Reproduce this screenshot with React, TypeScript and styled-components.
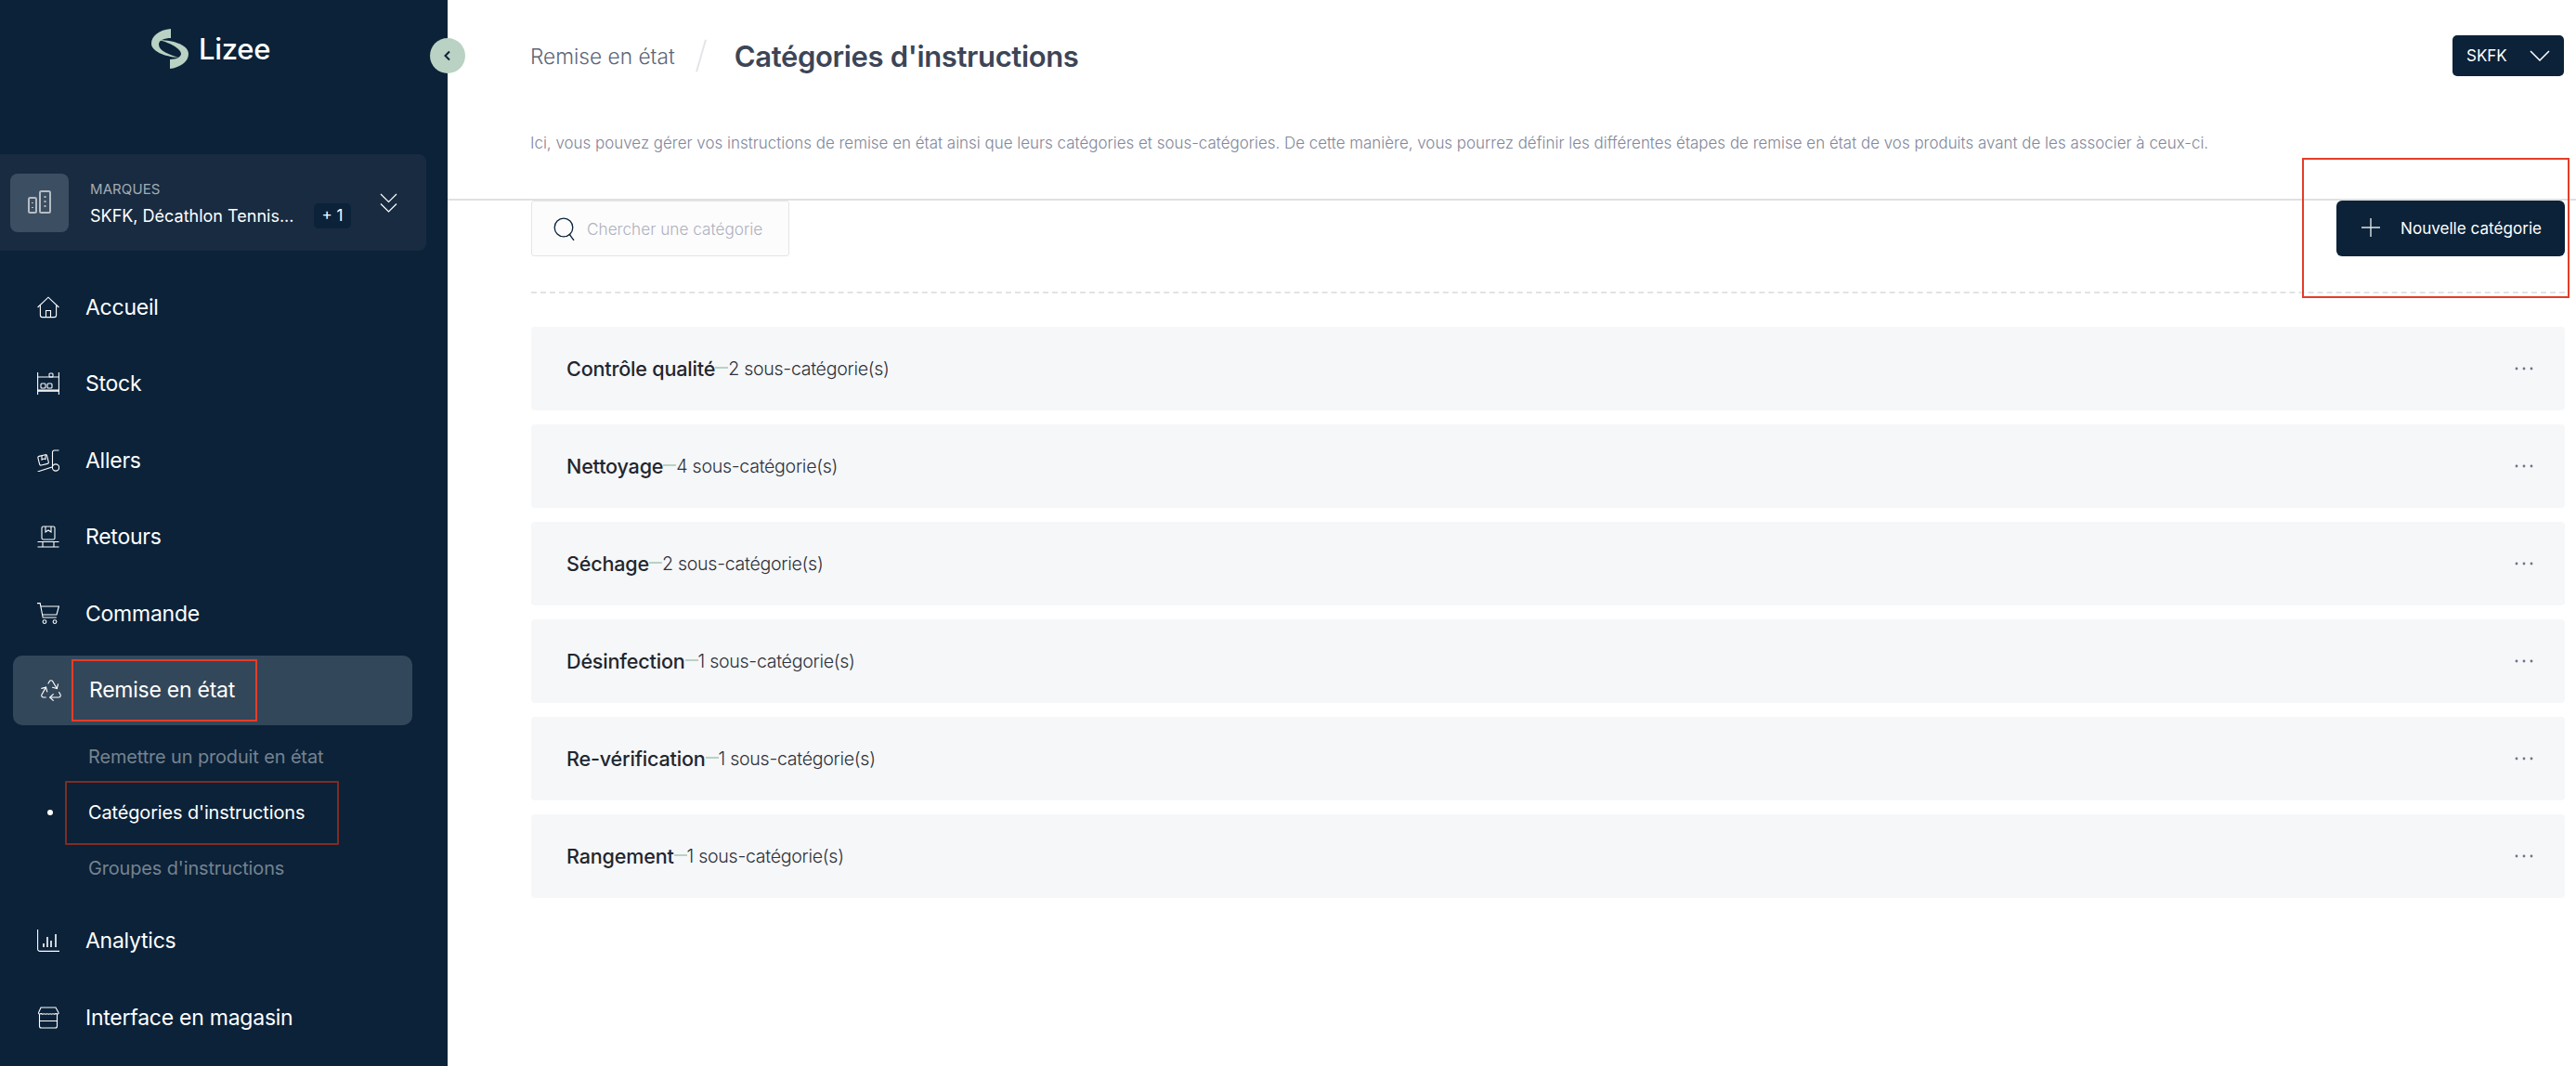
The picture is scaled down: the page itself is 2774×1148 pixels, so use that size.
import React from "react";
import styled, { createGlobalStyle } from "styled-components";
import { Recycle } from "lucide-react";

const Global = createGlobalStyle`
html, body {
  margin: 0;
  padding: 0;
  background: #fff;
  font-family: Inter, "Liberation Sans", sans-serif;
}
* { box-sizing: border-box; }
`

const Page = styled.div`
display: flex;
width: 2774px;
height: 1148px;
overflow: hidden;
`

const Sidebar = styled.aside`
position: relative;
flex: 0 0 482px;
display: flex;
flex-direction: column;
background-color: #0b2239;
color: #fff;
`

const LogoRow = styled.div`
height: 166px;
display: flex;
align-items: flex-start;
padding: 31px 0 0 163px;
gap: 11px;
`

const LogoText = styled.span`
font-size: 31px;
font-weight: 500;
line-height: 43px;
letter-spacing: -0.3px;
`

const CollapseButton = styled.button`
position: absolute;
top: 41px;
left: 463px;
width: 38px;
height: 38px;
padding: 0;
border: none;
border-radius: 50%;
background-color: #b9d2c3;
display: flex;
align-items: center;
justify-content: center;
color: #0b2239;
`

const BrandPanel = styled.div`
width: 459px;
height: 104px;
display: flex;
align-items: center;
padding-left: 11px;
background-color: #182b41;
border-radius: 0 8px 8px 0;
`

const BrandIcon = styled.div`
width: 63px;
height: 63px;
border-radius: 8px;
background-color: #3c4e61;
color: #b5bcc4;
display: flex;
align-items: center;
justify-content: center;
`

const BrandText = styled.div`
margin: 3px 0 0 23px;
width: 281px;
`

const BrandLabel = styled.div`
font-size: 15px;
line-height: 20px;
color: #a3acb6;
letter-spacing: 0.1px;
`

const BrandValue = styled.div`
margin-top: 5px;
display: flex;
align-items: center;
justify-content: space-between;
font-size: 18px;
line-height: 27px;
letter-spacing: 0;
`

const CountBadge = styled.span`
width: 40px;
height: 27px;
border-radius: 5px;
background-color: #0b2239;
font-size: 17px;
text-align: center;
`

const DoubleChevron = styled.svg`
margin-left: 31px;
width: 19px;
height: 21px;
`

const Nav = styled.nav`
padding-top: 23px;
display: flex;
flex-direction: column;
`

const NavItem = styled.div<{ $active?: boolean }>`
height: 75px;
margin-bottom: 7.5px;
display: flex;
align-items: center;
gap: ${(p) => (p.$active ? "10px" : "28px")};
margin-left: ${(p) => (p.$active ? "14px" : "0")};
width: ${(p) => (p.$active ? "430px" : "auto")};
padding-left: ${(p) => (p.$active ? "29px" : "40px")};
border-radius: 10px;
background-color: ${(p) => (p.$active ? "#33475b" : "transparent")};
font-size: 23px;
line-height: 32px;
letter-spacing: -0.25px;
svg { flex: 0 0 24px; width: 24px; height: 24px; }
`

const MarkedLabel = styled.span`
display: flex;
align-items: center;
width: 200px;
height: 67px;
padding-left: 17px;
border: 2px solid #e43d27;
`

const SubMenu = styled.div`
margin-top: -3px;
margin-bottom: 10.5px;
display: flex;
flex-direction: column;
`

const SubItem = styled.div<{ $current?: boolean }>`
position: relative;
height: 60px;
display: flex;
align-items: center;
padding-left: 95px;
font-size: 19.9px;
letter-spacing: -0.1px;
color: ${(p) => (p.$current ? "#fff" : "#76838f")};
`

const CurrentDot = styled.span`
position: absolute;
left: 51px;
top: 27px;
width: 6px;
height: 6px;
border-radius: 50%;
background-color: #fff;
`

const SubMarker = styled.span`
position: absolute;
left: 70px;
top: -4px;
width: 295px;
height: 69px;
border: 2px solid #7f2c23;
border-radius: 1px;
`

const Main = styled.main`
flex: 1;
min-width: 0;
display: flex;
flex-direction: column;
`

const Header = styled.header`
height: 216px;
border-bottom: 2px solid #e0e0e2;
padding: 0 13px 0 89px;
`

const TitleRow = styled.div`
height: 120px;
display: flex;
align-items: center;
`

const Crumb = styled.span`
font-size: 22.7px;
font-weight: 300;
color: #5d6679;
`

const Slash = styled.span`
width: 2px;
height: 36px;
margin: 0 35px 0 27px;
background-color: #e3e5e8;
transform: rotate(16deg);
`

const Title = styled.h1`
margin: 0;
flex: 1;
font-size: 31px;
font-weight: 600;
color: #3c4557;
letter-spacing: -0.35px;
`

const BrandSelect = styled.div`
width: 120px;
height: 44px;
display: flex;
align-items: center;
justify-content: space-between;
padding: 0 15px;
border-radius: 5px;
background-color: #0b2239;
color: #fff;
font-size: 17px;
`

const Intro = styled.p`
margin: 23px 0 0;
font-size: 16.95px;
line-height: 22px;
font-weight: 300;
color: #81869a;
white-space: nowrap;
`

const Content = styled.div`
padding: 0 12px 0 90px;
`

const Toolbar = styled.div`
position: relative;
height: 100px;
display: flex;
justify-content: space-between;
align-items: flex-start;
border-bottom: 2px dashed #e2e3e8;
`

const Search = styled.div`
width: 278px;
height: 60px;
display: flex;
align-items: center;
gap: 11px;
padding-left: 23px;
background-color: #fcfcfd;
border: 1px solid #e4e5e8;
border-radius: 3px;
font-size: 17.2px;
font-weight: 300;
color: #aeb1bd;
`

const AddButton = styled.button`
width: 246px;
height: 60px;
display: flex;
align-items: center;
gap: 22px;
padding: 0 0 2px 27px;
border: none;
border-radius: 6px;
background-color: #0b2239;
color: #fff;
font-family: inherit;
font-size: 17.1px;
white-space: nowrap;
`

const ButtonMarker = styled.span`
position: absolute;
top: -46px;
left: 1907px;
width: 288px;
height: 151px;
border: 2px solid #e43d27;
`

const List = styled.div`
padding-top: 36px;
display: flex;
flex-direction: column;
gap: 15px;
`

const Row = styled.div`
height: 90px;
display: flex;
align-items: center;
padding: 0 34px 0 38px;
background-color: #f6f7f9;
border-radius: 4px;
`

const RowName = styled.span`
font-size: 21.6px;
font-weight: 500;
color: #22262e;
letter-spacing: -0.2px;
`

const RowDash = styled.span`
width: 14px;
height: 2px;
margin-bottom: 3px;
background-color: #b9d2c3;
`

const RowCount = styled.span`
flex: 1;
font-size: 19.6px;
font-weight: 300;
color: #2e323a;
letter-spacing: -0.3px;
`

const RowMenu = styled.svg`
width: 20px;
height: 6px;
color: #6c7488;
`

const NavIcon: React.FC<{ name: string }> = ({ name }) => {
  const common = { viewBox: "0 0 24 24", fill: "none", stroke: "currentColor", strokeWidth: 1.1 };
  switch (name) {
    case "home":
      return (
        <svg {...common}>
          <path d="M0.6 12 12 1.2 23.4 12" />
          <path d="M3.4 10v10.6a2 2 0 0 0 2 2h13.2a2 2 0 0 0 2-2V10" />
          <path d="M9.5 22.5v-7h5v7" />
        </svg>
      );
    case "stock":
      return (
        <svg {...common}>
          <path d="M.6 0v24M23.4 0v24M.6 5h22.8M.6 19h22.8" />
          <path d="M.6 20h22.8" strokeWidth="1.6" />
          <rect x="4" y="12" width="5" height="5" rx="1" />
          <rect x="11" y="12" width="5" height="5" rx="1" />
          <rect x="13" y="1" width="4" height="4" rx="1" />
        </svg>
      );
    case "out":
      return (
        <svg {...common}>
          <path d="M23.5 1h-5a2 2 0 0 0-2 2v15" />
          <circle cx="20" cy="19.5" r="3.6" />
          <path d="M.5 24 16 19" />
          <rect x="1.5" y="6.5" width="10" height="10" rx="1.5" transform="rotate(-14 6 11)" />
          <path d="M5 7v4l2-1 2 .5V6" />
        </svg>
      );
    case "back":
      return (
        <svg {...common}>
          <rect x="5" y="1" width="14" height="14" rx="1.5" />
          <path d="M9 1v6l3-2 3 2V1" />
          <path d="M.5 17.5h23M.5 23h23M6 17.5V23M18 17.5V23" />
        </svg>
      );
    case "cart":
      return (
        <svg {...common}>
          <path d="M0 .6h3.2l3 15.4h14.6" />
          <path d="M4 4h19.4l-2.4 9H6" />
          <circle cx="8" cy="20.6" r="1.9" />
          <circle cx="19" cy="20.6" r="1.9" />
        </svg>
      );
    case "chart":
      return (
        <svg {...common}>
          <path d="M.6 0v21a2.4 2.4 0 0 0 2.4 2.4h21" />
          <path d="M7 19v-4M11 19V8M15 19v-7M20 19V5" strokeWidth="1.6" />
        </svg>
      );
    default:
      return (
        <svg {...common}>
          <path d="M4 1h16l3 5.5a1 1 0 0 1-1 1.5q-2-.8-3.4.2-1.6-1-3.2 0-1.4-1-3 0-1.6-1-3.2 0-1.6-1-3.2 0-1.6-1-3.4-.2a1 1 0 0 1-1-1.5z" />
          <path d="M2.5 8v13a2 2 0 0 0 2 2h15a2 2 0 0 0 2-2V8M2.5 15.5h19" />
        </svg>
      );
  }
};

const topItems = [
  { icon: "home", label: "Accueil" },
  { icon: "stock", label: "Stock" },
  { icon: "out", label: "Allers" },
  { icon: "back", label: "Retours" },
  { icon: "cart", label: "Commande" },
];

const bottomItems = [
  { icon: "chart", label: "Analytics" },
  { icon: "store", label: "Interface en magasin" },
];

const categories = [
  { name: "Contrôle qualité", count: 2 },
  { name: "Nettoyage", count: 4 },
  { name: "Séchage", count: 2 },
  { name: "Désinfection", count: 1 },
  { name: "Re-vérification", count: 1 },
  { name: "Rangement", count: 1 },
];

const App: React.FC = () => {
  return (
    <Page>
      <Global />
      <Sidebar>
        <LogoRow>
          <svg width="40" height="43" viewBox="0 0 40 43" fill="#b9d2c3">
            <path d="M21 0C8 1 0 8 0 16c0 8 14 14 29 15-9-3-21-7-21-14 0-5 6-7 13-7z" />
            <path d="M7 12c13 0 33 4 33 15 0 9-10 15-20 16V33c7 0 12-3 12-6 0-6-14-13-25-15z" />
          </svg>
          <LogoText>Lizee</LogoText>
        </LogoRow>
        <CollapseButton>
          <svg width="14" height="14" viewBox="0 0 14 14" fill="none" stroke="currentColor" strokeWidth="2">
            <path d="M9 2.5 4.5 7 9 11.5" />
          </svg>
        </CollapseButton>
        <BrandPanel>
          <BrandIcon>
            <svg width="26" height="26" viewBox="0 0 26 26" fill="none" stroke="currentColor" strokeWidth="2">
              <rect x="1" y="8" width="8" height="16" rx="1.5" />
              <rect x="13" y="1" width="11" height="23" rx="1.5" />
              <path d="M18.5 6v2M18.5 11v2M18.5 16v2M5 13v1M5 18v1" />
            </svg>
          </BrandIcon>
          <BrandText>
            <BrandLabel>MARQUES</BrandLabel>
            <BrandValue>
              SKFK, Décathlon Tennis...
              <CountBadge>+ 1</CountBadge>
            </BrandValue>
          </BrandText>
          <DoubleChevron viewBox="0 0 19 21" fill="none" stroke="#fff" strokeWidth="1.2">
            <path d="m1 1 8.5 8.5L18 1M1 11.5 9.5 20 18 11.5" />
          </DoubleChevron>
        </BrandPanel>
        <Nav>
          {topItems.map((item) => (
            <NavItem key={item.label}>
              <NavIcon name={item.icon} />
              {item.label}
            </NavItem>
          ))}
          <NavItem $active>
            <Recycle viewBox="1.5 1.5 21 21" strokeWidth={1} />
            <MarkedLabel>Remise en état</MarkedLabel>
          </NavItem>
          <SubMenu>
            <SubItem>Remettre un produit en état</SubItem>
            <SubItem $current>
              <CurrentDot />
              <SubMarker />
              Catégories d'instructions
            </SubItem>
            <SubItem>Groupes d'instructions</SubItem>
          </SubMenu>
          {bottomItems.map((item) => (
            <NavItem key={item.label}>
              <NavIcon name={item.icon} />
              {item.label}
            </NavItem>
          ))}
        </Nav>
      </Sidebar>
      <Main>
        <Header>
          <TitleRow>
            <Crumb>Remise en état</Crumb>
            <Slash />
            <Title>Catégories d'instructions</Title>
            <BrandSelect>
              SKFK
              <svg width="22" height="12" viewBox="0 0 22 12" fill="none" stroke="#fff" strokeWidth="1.5">
                <path d="m1 1 10 10 10-10" />
              </svg>
            </BrandSelect>
          </TitleRow>
          <Intro>
            Ici, vous pouvez gérer vos instructions de remise en état ainsi que leurs catégories et sous-catégories. De cette manière, vous pourrez définir les différentes étapes de remise en état de vos produits avant de les associer à ceux-ci.
          </Intro>
        </Header>
        <Content>
          <Toolbar>
            <Search>
              <svg width="25" height="25" viewBox="0 0 25 25" fill="none" stroke="#0b2239" strokeWidth="1.3">
                <circle cx="11" cy="11" r="9.8" />
                <path d="m17 18 5 7" />
              </svg>
              Chercher une catégorie
            </Search>
            <AddButton>
              <svg width="20" height="20" viewBox="0 0 20 20" fill="none" stroke="#dfe3e7" strokeWidth="1.4">
                <path d="M10 0v20M0 10h20" />
              </svg>
              Nouvelle catégorie
            </AddButton>
            <ButtonMarker />
          </Toolbar>
          <List>
            {categories.map((cat) => (
              <Row key={cat.name}>
                <RowName>{cat.name}</RowName>
                <RowDash />
                <RowCount>{cat.count} sous-catégorie(s)</RowCount>
                <RowMenu viewBox="0 0 20 6" fill="currentColor">
                  <circle cx="2" cy="3" r="1.4" />
                  <circle cx="10" cy="3" r="1.4" />
                  <circle cx="18" cy="3" r="1.4" />
                </RowMenu>
              </Row>
            ))}
          </List>
        </Content>
      </Main>
    </Page>
  );
};

export default App;
